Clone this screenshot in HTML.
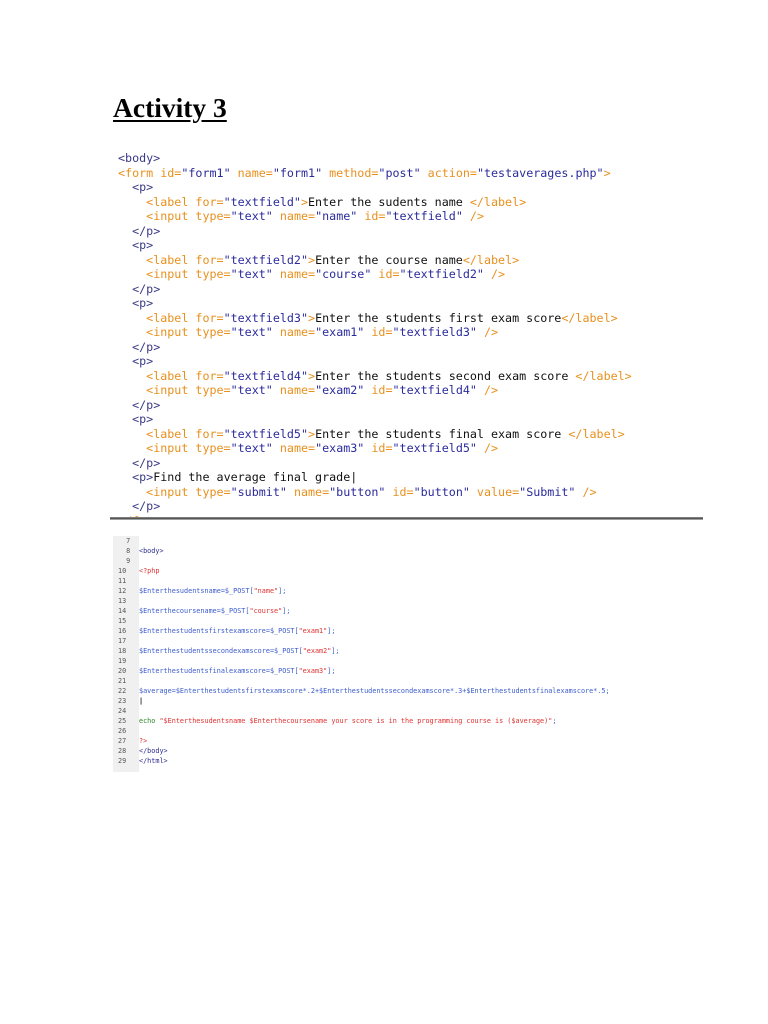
<!DOCTYPE html>
<html><head><meta charset="utf-8"><style>
body{margin:0;width:768px;height:1024px;background:#fff;position:relative;overflow:hidden}
h1{position:absolute;left:113px;top:92px;margin:0;font:bold 27.5px "Liberation Serif",serif;text-decoration:underline;text-underline-offset:3px;color:#000}
#c1{position:absolute;left:118px;top:151px;font:11.7px/14.5px "DejaVu Sans Mono","Liberation Mono",monospace;white-space:pre;color:#111;height:368px;overflow:hidden;width:585px}
.t{color:#e8901e}.v{color:#2b2b9e}.n{color:#3a3a88}
#sep{position:absolute;left:110px;top:517px;width:593px;height:3px;background:linear-gradient(#999,#444,#ccc)}
#g{position:absolute;left:113px;top:536px;width:26px;height:236px;background:#f0f0f0}
#c2{position:absolute;left:118px;top:536px;font:6.8px/10px "DejaVu Sans Mono","Liberation Mono",monospace;white-space:pre;color:#555}
#c2 span.l{display:inline-block;width:21px}
.b{color:#3b5bcc}.r{color:#e03030}.g{color:#2a8a2a}.k{color:#2a2a90}
</style></head><body>
<h1>Activity 3</h1>
<div id="c1"><span class="n">&lt;body&gt;</span>
<span class="t">&lt;form id=</span><span class="v">"form1"</span><span class="t"> name=</span><span class="v">"form1"</span><span class="t"> method=</span><span class="v">"post"</span><span class="t"> action=</span><span class="v">"testaverages.php"</span><span class="t">&gt;</span>
  <span class="n">&lt;p&gt;</span>
    <span class="t">&lt;label for=</span><span class="v">"textfield"</span><span class="t">&gt;</span>Enter the sudents name <span class="t">&lt;/label&gt;</span>
    <span class="t">&lt;input type=</span><span class="v">"text"</span><span class="t"> name=</span><span class="v">"name"</span><span class="t"> id=</span><span class="v">"textfield"</span><span class="t"> /&gt;</span>
  <span class="n">&lt;/p&gt;</span>
  <span class="n">&lt;p&gt;</span>
    <span class="t">&lt;label for=</span><span class="v">"textfield2"</span><span class="t">&gt;</span>Enter the course name<span class="t">&lt;/label&gt;</span>
    <span class="t">&lt;input type=</span><span class="v">"text"</span><span class="t"> name=</span><span class="v">"course"</span><span class="t"> id=</span><span class="v">"textfield2"</span><span class="t"> /&gt;</span>
  <span class="n">&lt;/p&gt;</span>
  <span class="n">&lt;p&gt;</span>
    <span class="t">&lt;label for=</span><span class="v">"textfield3"</span><span class="t">&gt;</span>Enter the students first exam score<span class="t">&lt;/label&gt;</span>
    <span class="t">&lt;input type=</span><span class="v">"text"</span><span class="t"> name=</span><span class="v">"exam1"</span><span class="t"> id=</span><span class="v">"textfield3"</span><span class="t"> /&gt;</span>
  <span class="n">&lt;/p&gt;</span>
  <span class="n">&lt;p&gt;</span>
    <span class="t">&lt;label for=</span><span class="v">"textfield4"</span><span class="t">&gt;</span>Enter the students second exam score <span class="t">&lt;/label&gt;</span>
    <span class="t">&lt;input type=</span><span class="v">"text"</span><span class="t"> name=</span><span class="v">"exam2"</span><span class="t"> id=</span><span class="v">"textfield4"</span><span class="t"> /&gt;</span>
  <span class="n">&lt;/p&gt;</span>
  <span class="n">&lt;p&gt;</span>
    <span class="t">&lt;label for=</span><span class="v">"textfield5"</span><span class="t">&gt;</span>Enter the students final exam score <span class="t">&lt;/label&gt;</span>
    <span class="t">&lt;input type=</span><span class="v">"text"</span><span class="t"> name=</span><span class="v">"exam3"</span><span class="t"> id=</span><span class="v">"textfield5"</span><span class="t"> /&gt;</span>
  <span class="n">&lt;/p&gt;</span>
  <span class="n">&lt;p&gt;</span>Find the average final grade|
    <span class="t">&lt;input type=</span><span class="v">"submit"</span><span class="t"> name=</span><span class="v">"button"</span><span class="t"> id=</span><span class="v">"button"</span><span class="t"> value=</span><span class="v">"Submit"</span><span class="t"> /&gt;</span>
  <span class="n">&lt;/p&gt;</span>
<span class="t">&lt;/form&gt;</span></div>
<div id="sep"></div>
<div id="g"></div>
<div id="c2"><span class="l">  7</span>
<span class="l">  8</span><span class="k">&lt;body&gt;</span>
<span class="l">  9</span>
<span class="l">10</span><span class="r">&lt;?php</span>
<span class="l">11</span>
<span class="l">12</span><span class="b">$Enterthesudentsname=$_POST[</span><span class="r">"name"</span><span class="b">];</span>
<span class="l">13</span>
<span class="l">14</span><span class="b">$Enterthecoursename=$_POST[</span><span class="r">"course"</span><span class="b">];</span>
<span class="l">15</span>
<span class="l">16</span><span class="b">$Enterthestudentsfirstexamscore=$_POST[</span><span class="r">"exam1"</span><span class="b">];</span>
<span class="l">17</span>
<span class="l">18</span><span class="b">$Enterthestudentssecondexamscore=$_POST[</span><span class="r">"exam2"</span><span class="b">];</span>
<span class="l">19</span>
<span class="l">20</span><span class="b">$Enterthestudentsfinalexamscore=$_POST[</span><span class="r">"exam3"</span><span class="b">];</span>
<span class="l">21</span>
<span class="l">22</span><span class="b">$average=$Enterthestudentsfirstexamscore*.2+$Enterthestudentssecondexamscore*.3+$Enterthestudentsfinalexamscore*.5;</span>
<span class="l">23</span><span style="color:#000;font-weight:bold">|</span>
<span class="l">24</span>
<span class="l">25</span><span class="g">echo </span><span class="r">"$Enterthesudentsname $Enterthecoursename your score is in the programming course is ($average)"</span><span class="b">;</span>
<span class="l">26</span>
<span class="l">27</span><span class="r">?&gt;</span>
<span class="l">28</span><span class="k">&lt;/body&gt;</span>
<span class="l">29</span><span class="k">&lt;/html&gt;</span></div>
</body></html>
